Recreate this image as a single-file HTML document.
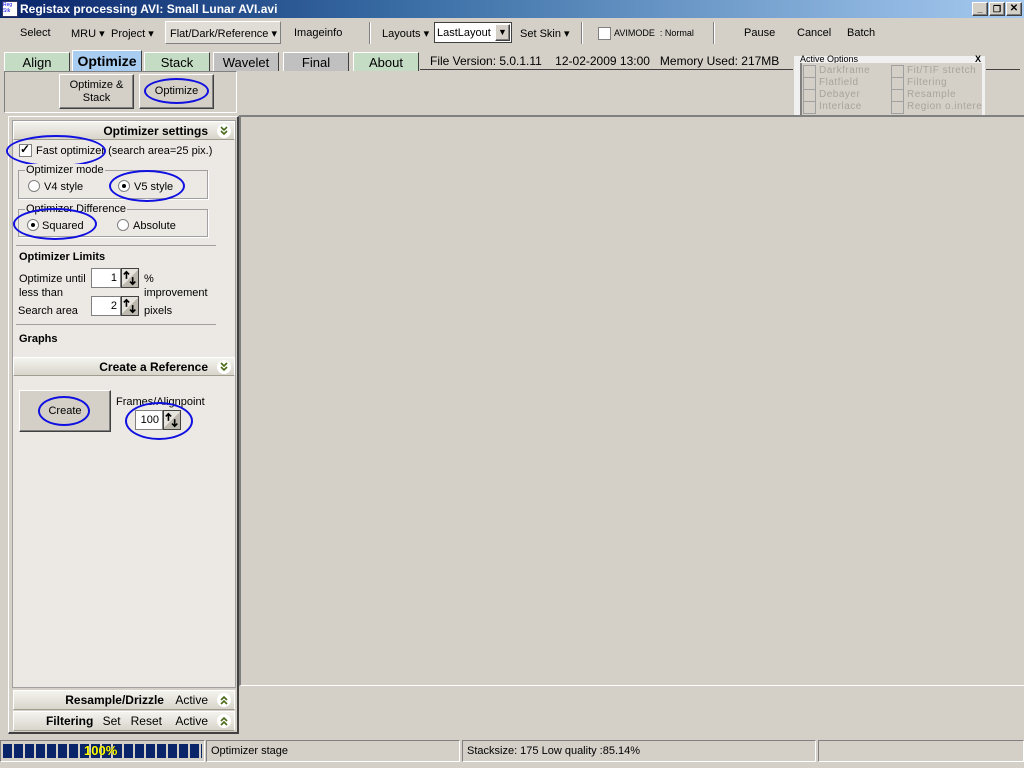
<!DOCTYPE html><html><head><style>
*{margin:0;padding:0;box-sizing:border-box}
body{width:1024px;height:768px;background:#d4d0c8;font-family:"Liberation Sans",Tahoma,sans-serif;font-size:11px;color:#000;position:relative;overflow:hidden}
.a{position:absolute}
.t{position:absolute;white-space:nowrap}
.tab{position:absolute;top:52px;height:19px;font-size:13px;text-align:center;line-height:20px;border:1px solid #fff;border-right-color:#404040;border-bottom:none}
.btn{position:absolute;background:#d4d0c8;border:1px solid;border-color:#fff #404040 #404040 #fff;box-shadow:inset -1px -1px #808080;text-align:center}
.ell{position:absolute;border:2px solid #1010e0;border-radius:50%}
.hdr{position:absolute;left:13px;width:222px;height:19px;background:linear-gradient(#f4f3ee,#d8d5cb);border:1px solid #fff;border-bottom-color:#a09c90;font-weight:bold;font-size:12px;text-align:right;padding-right:26px;line-height:18px}
.chev{position:absolute;right:3px;top:2px;width:14px;height:14px;border-radius:50%;background:#fff}
.cb{position:absolute;width:13px;height:13px;background:#fff;border:1px solid #808080}
.rd{position:absolute;width:12px;height:12px;border-radius:50%;background:#fff;border:1px solid #808080}
.grp{position:absolute;border:1px solid #a0a0a0;box-shadow:1px 1px #fff}
.spin{position:absolute;width:52px;height:20px}
.spin .v{position:absolute;left:0;top:0;width:30px;height:20px;background:#fff;border:1px solid #808080;text-align:right;padding-right:3px;line-height:18px}
.spin .s{position:absolute;left:30px;top:0;width:18px;height:20px;background:linear-gradient(135deg,#e6e4dc 50%,#bdb9ae 50%);border:1px solid #404040}
.ao{color:#a8a49c;font-size:10px;letter-spacing:.5px}
</style></head><body>
<svg width="0" height="0" style="position:absolute"><defs>
<symbol id="dn" viewBox="0 0 14 14"><path d="M4 3l3 3 3-3M4 7l3 3 3-3" fill="none" stroke="#4a6a1a" stroke-width="1.6"/></symbol>
<symbol id="up" viewBox="0 0 14 14"><path d="M4 7l3-3 3 3M4 11l3-3 3 3" fill="none" stroke="#4a6a1a" stroke-width="1.6"/></symbol>
<symbol id="sp" viewBox="0 0 18 20"><path d="M5 11V3M2 6l3-3 3 3M12 9v8M9 14l3 3 3-3" fill="none" stroke="#000" stroke-width="1.8"/></symbol>
</defs></svg>
<div class="a" style="left:0;top:0;width:1024px;height:18px;background:linear-gradient(90deg,#0a246a,#3a6ea5 40%,#a6caf0)"></div>
<div class="a" style="left:2px;top:1px;width:16px;height:16px;background:#fff;border:1px solid #336;font-size:5px;color:#00f;line-height:6px">Reg<br>Stk</div>
<div class="t" style="left:20px;top:2px;color:#fff;font-weight:bold;font-size:12px">Registax processing AVI: Small Lunar AVI.avi</div>
<div class="btn" style="left:972px;top:2px;width:16px;height:14px;font-size:9px;line-height:12px;font-weight:bold">_</div>
<div class="btn" style="left:989px;top:2px;width:16px;height:14px;font-size:9px;line-height:12px;font-weight:bold">❐</div>
<div class="btn" style="left:1006px;top:2px;width:16px;height:14px;font-size:10px;line-height:12px;font-weight:bold">✕</div>

<div class="t" style="left:20px;top:27px">Select</div>
<div class="t" style="left:71px;top:27px">MRU ▾</div>
<div class="t" style="left:111px;top:27px">Project ▾</div>
<div class="a" style="left:165px;top:21px;width:116px;height:23px;border:1px solid #fff;border-right-color:#808080;border-bottom-color:#808080;background:#e0ddd6"></div>
<div class="t" style="left:170px;top:27px">Flat/Dark/Reference ▾</div>
<div class="t" style="left:294px;top:27px">Imageinfo</div>
<div class="a" style="left:369px;top:22px;width:2px;height:22px;border-left:1px solid #808080;border-right:1px solid #fff"></div>
<div class="t" style="left:382px;top:27px">Layouts ▾</div>
<div class="a" style="left:434px;top:22px;width:78px;height:21px;background:#fff;border:1px solid #404040"></div>
<div class="t" style="left:437px;top:27px">LastLayout</div>
<div class="btn" style="left:495px;top:24px;width:15px;height:17px;font-size:9px;line-height:15px">▼</div>
<div class="t" style="left:520px;top:27px">Set Skin ▾</div>
<div class="a" style="left:581px;top:22px;width:2px;height:22px;border-left:1px solid #808080;border-right:1px solid #fff"></div>
<div class="cb" style="left:598px;top:27px"></div>
<div class="t" style="left:614px;top:28px;font-size:9px">AVIMODE &nbsp;: Normal</div>
<div class="a" style="left:713px;top:22px;width:2px;height:22px;border-left:1px solid #808080;border-right:1px solid #fff"></div>
<div class="t" style="left:744px;top:27px">Pause</div>
<div class="t" style="left:797px;top:27px">Cancel</div>
<div class="t" style="left:847px;top:27px">Batch</div>

<div class="tab" style="left:4px;width:66px;background:#c4dcc4">Align</div>
<div class="tab" style="left:72px;width:70px;top:50px;height:21px;background:#a8cdf0;font-weight:bold;font-size:14px">Optimize</div>
<div class="tab" style="left:144px;width:66px;background:#c4dcc4">Stack</div>
<div class="tab" style="left:213px;width:66px;background:#c0c0c0">Wavelet</div>
<div class="tab" style="left:283px;width:66px;background:#c0c0c0">Final</div>
<div class="tab" style="left:353px;width:66px;background:#c4dcc4">About</div>
<div class="t" style="left:430px;top:54px;font-size:12px">File Version: 5.0.1.11 &nbsp;&nbsp;&nbsp;12-02-2009 13:00 &nbsp;&nbsp;Memory Used: 217MB</div>
<div class="a" style="left:420px;top:69px;width:600px;height:1px;background:#404040"></div>

<div class="a" style="left:4px;top:71px;width:233px;height:42px;border:1px solid #808080;border-right-color:#fff;border-bottom-color:#fff"></div>
<div class="btn" style="left:59px;top:74px;width:75px;height:35px;padding-top:4px;line-height:13px">Optimize &amp;<br>Stack</div>
<div class="btn" style="left:139px;top:74px;width:75px;height:35px;line-height:33px">Optimize</div>
<div class="ell" style="left:144px;top:78px;width:65px;height:26px"></div>

<div class="a" style="left:793px;top:55px;width:193px;height:61px;background:#f0f0f0;border:1px solid #d4d0c8"></div>
<div class="t" style="left:800px;top:54px;font-size:9px">Active Options</div>
<div class="t" style="left:975px;top:54px;font-size:9px;font-weight:bold">X</div>
<div class="a" style="left:800px;top:63px;width:182px;height:52px;border-left:2px solid #808080;background:#d4d0c8"></div>
<div class="cb" style="left:803px;top:65px;border-color:#a0a0a0;background:#d4d0c8"></div><div class="t ao" style="left:819px;top:65px">Darkframe</div>
<div class="cb" style="left:803px;top:77px;border-color:#a0a0a0;background:#d4d0c8"></div><div class="t ao" style="left:819px;top:77px">Flatfield</div>
<div class="cb" style="left:803px;top:89px;border-color:#a0a0a0;background:#d4d0c8"></div><div class="t ao" style="left:819px;top:89px">Debayer</div>
<div class="cb" style="left:803px;top:101px;border-color:#a0a0a0;background:#d4d0c8"></div><div class="t ao" style="left:819px;top:101px">Interlace</div>
<div class="cb" style="left:891px;top:65px;border-color:#a0a0a0;background:#d4d0c8"></div><div class="t ao" style="left:907px;top:65px">Fit/TIF stretch</div>
<div class="cb" style="left:891px;top:77px;border-color:#a0a0a0;background:#d4d0c8"></div><div class="t ao" style="left:907px;top:77px">Filtering</div>
<div class="cb" style="left:891px;top:89px;border-color:#a0a0a0;background:#d4d0c8"></div><div class="t ao" style="left:907px;top:89px">Resample</div>
<div class="cb" style="left:891px;top:101px;border-color:#a0a0a0;background:#d4d0c8"></div><div class="t ao" style="left:907px;top:101px">Region o.intere</div>

<div class="a" style="left:239px;top:115px;width:785px;height:571px;border-top:2px solid #808080;border-left:2px solid #808080;border-bottom:1px solid #fff"></div>

<div class="a" style="left:8px;top:116px;width:231px;height:618px;border:1px solid #fff;border-right:2px solid #404040;border-bottom:2px solid #404040"></div>
<div class="a" style="left:12px;top:120px;width:224px;height:568px;background:#ece9e4;border:1px solid #a0a0a0"></div>
<div class="hdr" style="top:121px">Optimizer settings<svg class="chev"><use href="#dn"/></svg></div>
<div class="cb" style="left:19px;top:144px"></div><div class="t" style="left:20px;top:142px;font-size:12px;font-weight:bold">✓</div>
<div class="t" style="left:36px;top:145px">Fast optimizer (search area=25 pix.)</div>
<div class="ell" style="left:6px;top:135px;width:100px;height:32px"></div>
<div class="grp" style="left:18px;top:170px;width:190px;height:29px"></div>
<div class="t" style="left:25px;top:164px;background:#ece9e4;padding:0 1px">Optimizer mode</div>
<div class="rd" style="left:28px;top:180px"></div><div class="t" style="left:44px;top:181px">V4 style</div>
<div class="rd" style="left:118px;top:180px"></div><div class="a" style="left:122px;top:184px;width:4px;height:4px;background:#000;border-radius:50%"></div><div class="t" style="left:134px;top:181px">V5 style</div>
<div class="ell" style="left:109px;top:170px;width:76px;height:32px"></div>
<div class="grp" style="left:18px;top:209px;width:190px;height:28px"></div>
<div class="t" style="left:25px;top:203px;background:#ece9e4;padding:0 1px">Optimizer Difference</div>
<div class="rd" style="left:27px;top:219px"></div><div class="a" style="left:31px;top:223px;width:4px;height:4px;background:#000;border-radius:50%"></div><div class="t" style="left:42px;top:220px">Squared</div>
<div class="rd" style="left:117px;top:219px"></div><div class="t" style="left:133px;top:220px">Absolute</div>
<div class="ell" style="left:13px;top:208px;width:84px;height:32px"></div>
<div class="a" style="left:16px;top:245px;width:200px;height:1px;background:#a0a0a0"></div>
<div class="t" style="left:19px;top:251px;font-weight:bold">Optimizer Limits</div>
<div class="t" style="left:19px;top:272px;line-height:14px">Optimize until<br>less than</div>
<div class="spin" style="left:91px;top:268px"><div class="v">1</div><svg class="s"><use href="#sp"/></svg></div>
<div class="t" style="left:144px;top:272px;line-height:14px">%<br>improvement</div>
<div class="t" style="left:18px;top:305px">Search area</div>
<div class="spin" style="left:91px;top:296px"><div class="v">2</div><svg class="s"><use href="#sp"/></svg></div>
<div class="t" style="left:144px;top:305px">pixels</div>
<div class="a" style="left:16px;top:324px;width:200px;height:1px;background:#a0a0a0"></div>
<div class="t" style="left:19px;top:333px;font-weight:bold">Graphs</div>
<div class="hdr" style="top:357px">Create a Reference<svg class="chev"><use href="#dn"/></svg></div>
<div class="btn" style="left:19px;top:390px;width:92px;height:42px;line-height:40px">Create</div>
<div class="ell" style="left:38px;top:396px;width:52px;height:30px"></div>
<div class="t" style="left:116px;top:396px">Frames/Alignpoint</div>
<div class="spin" style="left:135px;top:410px"><div class="v" style="width:28px">100</div><svg class="s" style="left:28px"><use href="#sp"/></svg></div>
<div class="ell" style="left:125px;top:402px;width:68px;height:38px"></div>
<div class="hdr" style="top:690px;height:20px;font-size:12px">Resample/Drizzle <span style="font-weight:normal;margin-left:8px">Active</span><svg class="chev"><use href="#up"/></svg></div>
<div class="hdr" style="top:711px;height:20px">Filtering <span style="font-weight:normal;margin-left:6px">Set &nbsp;&nbsp;Reset &nbsp;&nbsp;&nbsp;Active</span><svg class="chev"><use href="#up"/></svg></div>

<div class="a" style="left:0;top:740px;width:205px;height:22px;border:1px solid #808080;border-right-color:#fff;border-bottom-color:#fff;padding:3px 2px"><div style="height:14px;background:repeating-linear-gradient(90deg,#0a246a 0 9px,#d4d0c8 9px 11px)"></div></div>
<div class="t" style="left:84px;top:743px;color:#ff0;font-size:13px;font-weight:bold;text-shadow:0 0 1px #000">100%</div>
<div class="a" style="left:206px;top:740px;width:254px;height:22px;border:1px solid #808080;border-right-color:#fff;border-bottom-color:#fff"></div>
<div class="t" style="left:211px;top:745px">Optimizer stage</div>
<div class="a" style="left:462px;top:740px;width:354px;height:22px;border:1px solid #808080;border-right-color:#fff;border-bottom-color:#fff"></div>
<div class="t" style="left:467px;top:745px">Stacksize: 175 Low quality :85.14%</div>
<div class="a" style="left:818px;top:740px;width:206px;height:22px;border:1px solid #808080;border-right-color:#fff;border-bottom-color:#fff"></div>
</body></html>
